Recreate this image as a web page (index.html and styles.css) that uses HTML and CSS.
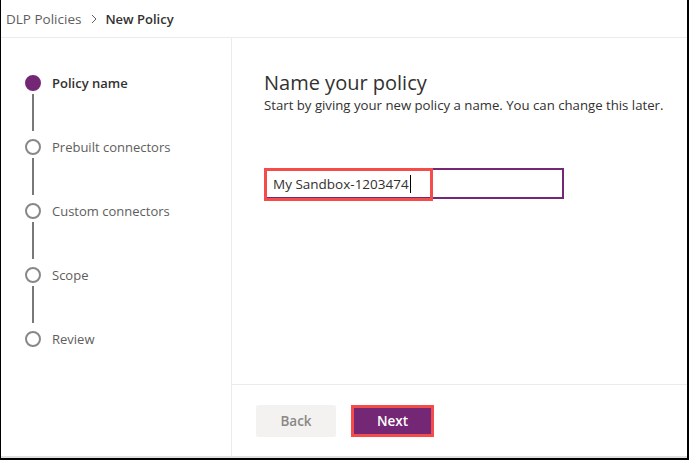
FILE: index.html
```html
<!DOCTYPE html>
<html>
<head>
<meta charset="utf-8">
<link rel="stylesheet" href="styles.css">
</head>
<body>
<div class="frame">
  <header class="header">
    <span class="crumb">DLP Policies</span>
    <svg class="chev" width="8" height="10" viewBox="0 0 8 10"><path d="M2 1 L6 5 L2 9" fill="none" stroke="#605e5c" stroke-width="1"/></svg>
    <span class="crumb-current">New Policy</span>
  </header>
  <div class="main">
    <nav class="sidebar">
      <div class="step active"><span class="dot"></span><span class="label">Policy name</span></div>
      <div class="line"></div>
      <div class="step"><span class="dot"></span><span class="label">Prebuilt connectors</span></div>
      <div class="line"></div>
      <div class="step"><span class="dot"></span><span class="label">Custom connectors</span></div>
      <div class="line"></div>
      <div class="step"><span class="dot"></span><span class="label">Scope</span></div>
      <div class="line"></div>
      <div class="step"><span class="dot"></span><span class="label">Review</span></div>
    </nav>
    <section class="content">
      <div class="body">
        <h1 class="title">Name your policy</h1>
        <p class="desc">Start by giving your new policy a name. You can change this later.</p>
        <div class="field">
          <div class="input"><span class="value">My Sandbox-1203474</span><span class="caret"></span></div>
          <div class="highlight"></div>
        </div>
      </div>
      <footer class="footer">
        <button class="btn back">Back</button>
        <button class="btn next">Next</button>
      </footer>
    </section>
  </div>
</div>
</body>
</html>
```
FILE: styles.css
```css
* { box-sizing: border-box; }
html, body { margin: 0; padding: 0; }
body {
  width: 689px;
  height: 460px;
  overflow: hidden;
  background: #fff;
  font-family: "Open Sans", "Noto Sans", sans-serif;
  color: #323130;
}
.frame {
  width: 689px;
  height: 460px;
  border-left: 1px solid #000;
  border-right: 2px solid #000;
  border-bottom: 2px solid #000;
  display: flex;
  flex-direction: column;
}
.header {
  height: 38px;
  border-bottom: 1px solid #edebe9;
  display: flex;
  align-items: center;
  padding-left: 5px;
  font-size: 13.5px;
  flex: none;
}
.crumb { color: #605e5c; }
.chev { margin: 0 7px 0 9px; }
.crumb-current { font-weight: 600; color: #323130; font-size: 13px; }
.main {
  flex: 1;
  display: flex;
  border-bottom: 2px solid #e1dfdd;
}
.sidebar {
  width: 231px;
  border-right: 1px solid #edebe9;
  padding: 37px 0 0 24px;
  display: flex;
  flex-direction: column;
  flex: none;
}
.step {
  display: flex;
  align-items: center;
  height: 16px;
}
.dot {
  width: 16px;
  height: 16px;
  border-radius: 50%;
  border: 2px solid #8a8886;
  flex: none;
}
.step.active .dot { background: #742774; border-color: #742774; }
.label {
  margin-left: 11px;
  font-size: 13px;
  color: #605e5c;
}
.step.active .label { font-weight: 600; color: #323130; }
.line {
  width: 2px;
  height: 37px;
  background: #7a7876;
  margin: 3px 0 8px 7px;
}
.content {
  flex: 1;
  display: flex;
  flex-direction: column;
}
.body {
  flex: 1;
  padding: 33px 0 0 32px;
}
.title {
  margin: 0;
  font-size: 20px;
  font-weight: 400;
  color: #323130;
  line-height: 24px;
}
.desc {
  margin: 1px 0 0;
  font-size: 13.2px;
  line-height: 18px;
  color: #323130;
}
.field {
  position: relative;
  margin-top: 54px;
  width: 300px;
}
.input {
  height: 31px;
  border: 2px solid #742774;
  display: flex;
  align-items: center;
  padding-left: 7px;
  font-size: 13.5px;
  color: #323130;
}
.caret {
  width: 1px;
  height: 18px;
  background: #000;
  margin-left: 1px;
}
.highlight {
  position: absolute;
  left: 0;
  top: 0;
  width: 169px;
  height: 33px;
  border: 3px solid #f44b4b;
}
.footer {
  height: 72px;
  border-top: 1px solid #edebe9;
  display: flex;
  align-items: center;
  padding: 0 0 0 24px;
  gap: 15px;
  flex: none;
}
.btn {
  height: 32px;
  font-family: inherit;
  font-size: 13.5px;
  font-weight: 600;
  border: none;
  border-radius: 2px;
  padding: 0;
}
.back {
  width: 80px;
  background: #f3f2f1;
  color: #8a8886;
}
.next {
  width: 83px;
  background: #742774;
  color: #fff;
  border: 3px solid #f44b4b;
  border-radius: 0;
}
```
